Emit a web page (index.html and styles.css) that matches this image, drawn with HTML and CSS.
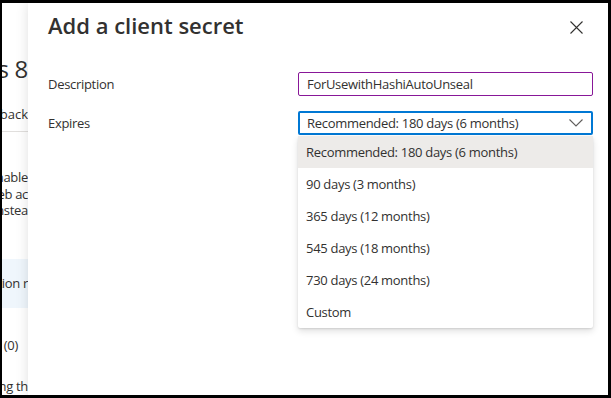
FILE: index.html
```html
<!DOCTYPE html>
<html lang="en">
  <head>
    <meta charset="UTF-8" />
    <meta name="viewport" content="width=device-width, initial-scale=1.0" />
    <title>Add a client secret</title>
    <link rel="stylesheet" href="styles.css">
  </head>
  <body>
    <div class="frame">
      <div class="backdrop">
        <div class="backdrop-inner">
          <div class="bd-title">Certificates &amp; secrets 8</div>
          <div class="bd-tabs">Got feedback</div>
          <div class="bd-text">
            <p>Credentials enable</p>
            <p>using HTTPS in a web ac</p>
            <p>public key) as a credential instea</p>
          </div>
          <div class="bd-banner">Application registration r</div>
          <div class="bd-count">Certificates (0)</div>
          <div class="bd-foot">A secret string that the application uses to prove its identity when requesting th</div>
        </div>
      </div>

      <div class="panel">
        <div class="panel-header">
          <h1>Add a client secret</h1>
          <button class="close" aria-label="Close">
            <svg width="13" height="13" viewBox="0 0 13 13">
              <path d="M0.5 0.5 L12.5 12.5 M12.5 0.5 L0.5 12.5" stroke="#323130" stroke-width="1.1" fill="none" />
            </svg>
          </button>
        </div>

        <div class="form">
          <label for="description">Description</label>
          <input type="text" id="description" class="text-field" value="ForUsewithHashiAutoUnseal" />

          <label>Expires</label>
          <div class="dropdown">
            <div class="dropdown-title">
              <span>Recommended: 180 days (6 months)</span>
              <svg width="14" height="8" viewBox="0 0 14 8">
                <path d="M0.5 0.5 L7 7 L13.5 0.5" stroke="#605e5c" stroke-width="1.1" fill="none" />
              </svg>
            </div>
            <ul class="dropdown-list">
              <li class="selected">Recommended: 180 days (6 months)</li>
              <li>90 days (3 months)</li>
              <li>365 days (12 months)</li>
              <li>545 days (18 months)</li>
              <li>730 days (24 months)</li>
              <li>Custom</li>
            </ul>
          </div>
        </div>
      </div>
    </div>
  </body>
</html>
```

FILE: styles.css
```css
html,
body {
  margin: 0;
  padding: 0;
}

body {
  font-family: "Open Sans", "Noto Sans", sans-serif;
  color: #323130;
  background-color: #000;
}

.frame {
  display: flex;
  height: 398px;
  box-sizing: border-box;
  border-style: solid;
  border-color: #000;
  border-width: 3px 3px 3px 2px;
  background-color: #fff;
  overflow: hidden;
}

/* page behind the side panel, only a sliver shows */
.backdrop {
  width: 26px;
  flex-shrink: 0;
  overflow: hidden;
  background-color: #fff;
}

.backdrop-inner {
  width: 400px;
  margin-left: -374px;
  display: flex;
  flex-direction: column;
  align-items: flex-end;
  font-size: 13px;
  letter-spacing: -0.3px;
  white-space: nowrap;
}

.bd-title {
  margin-top: 50px;
  font-size: 24px;
  line-height: 32px;
}

.bd-tabs {
  margin-top: 20px;
  width: 100%;
  text-align: right;
  padding-bottom: 8px;
  border-bottom: 1px solid #e1dfdd;
  letter-spacing: 0;
}

.bd-text {
  margin-top: 37px;
  line-height: 16.5px;
}

.bd-text p {
  margin: 0;
  text-align: right;
}

.bd-banner {
  margin-top: 40px;
  width: 100%;
  height: 49px;
  line-height: 49px;
  text-align: right;
  background-color: #eff6fc;
}

.bd-count {
  margin-top: 28px;
  padding-right: 10px;
}

.bd-foot {
  margin-top: 23px;
}

.panel {
  flex: 1;
  background-color: #fff;
  padding: 0 15px 0 20px;
  box-shadow: 0 0 12px rgba(0, 0, 0, 0.13);
  position: relative;
}

.panel-header {
  display: flex;
  align-items: center;
  justify-content: space-between;
  height: 44px;
}

.panel-header h1 {
  margin: 0;
  font-size: 22px;
  font-weight: 600;
  color: #323130;
}

.close {
  background: none;
  border: none;
  padding: 0;
  margin-right: 10px;
  margin-top: 4px;
  display: flex;
  cursor: pointer;
}

.form {
  display: grid;
  grid-template-columns: 250px 295px;
  row-gap: 15px;
  align-items: center;
  margin-top: 25px;
  font-size: 13px;
  letter-spacing: -0.3px;
}

.form label {
  color: #323130;
}

.text-field {
  height: 24px;
  box-sizing: border-box;
  border: 1px solid #881798;
  border-radius: 2px;
  padding: 0 8px;
  font-family: inherit;
  font-size: 13px;
  letter-spacing: -0.3px;
  color: #323130;
  outline: none;
}

.dropdown {
  position: relative;
}

.dropdown-title {
  height: 24px;
  box-sizing: border-box;
  border: 2px solid #0078d4;
  border-radius: 2px;
  padding: 0 8px 0 7px;
  display: flex;
  align-items: center;
  justify-content: space-between;
}

.dropdown-list {
  position: absolute;
  top: 25px;
  left: 0;
  right: 0;
  margin: 0;
  padding: 0;
  list-style: none;
  background-color: #fff;
  border-radius: 2px;
  box-shadow: 0 3px 7px rgba(0, 0, 0, 0.13), 0 1px 2px rgba(0, 0, 0, 0.11);
}

.dropdown-list li {
  height: 32px;
  line-height: 32px;
  padding: 0 8px;
}

.dropdown-list .selected {
  background-color: #edebe9;
}
```
